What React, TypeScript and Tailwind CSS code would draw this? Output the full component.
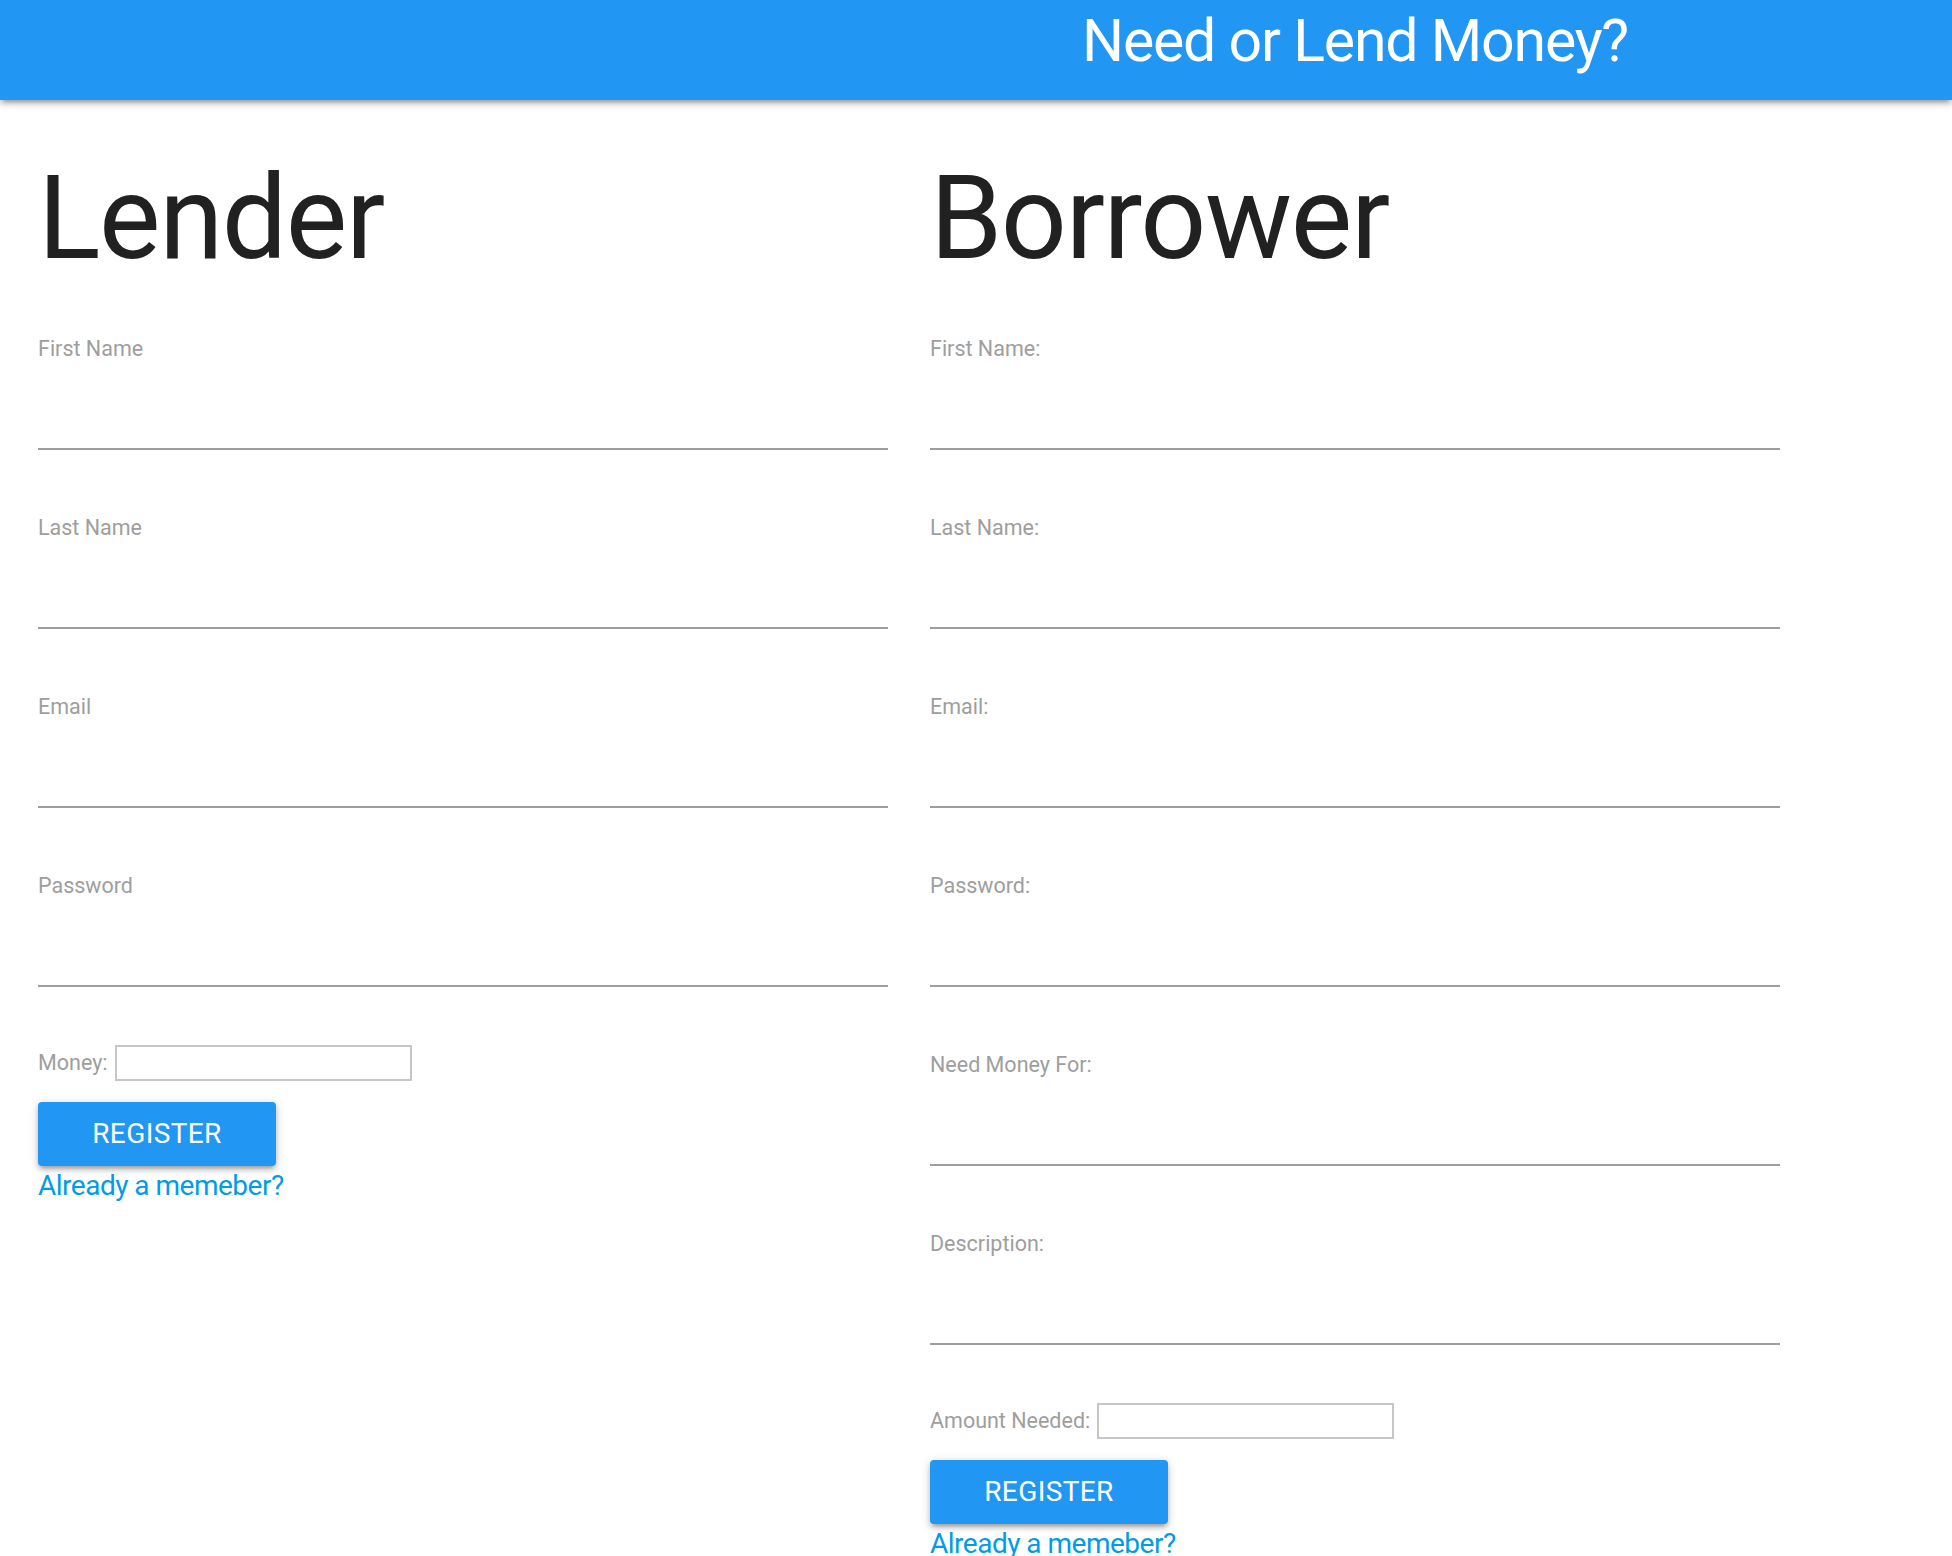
const FONT = "font-['Roboto','Liberation_Sans',sans-serif]";

type FieldProps = { label: string };

function Field({ label }: FieldProps) {
  return (
    <div className="flex flex-col">
      <label className="text-[21.5px] leading-[26px] text-[#9e9e9e]">{label}</label>
      <input
        type="text"
        className="h-[88px] w-full border-b-2 border-[#9e9e9e] bg-transparent outline-none"
      />
    </div>
  );
}

function InlineField({ label }: FieldProps) {
  return (
    <div className="mt-[58px] flex items-center">
      <span className="text-[21.5px] leading-[26px] text-[#9e9e9e]">{label}</span>
      <input
        type="text"
        className="ml-[7px] h-[36px] w-[297px] border-2 border-[#c6c6c6] bg-white outline-none"
      />
    </div>
  );
}

function RegisterBlock() {
  return (
    <>
      <button
        type="button"
        className="mt-[21px] h-[64px] w-[238px] rounded-[4px] bg-[#2196f3] text-[28px] tracking-[0.4px] text-white shadow-[0_4px_4px_0_rgba(0,0,0,0.14),0_6px_2px_-4px_rgba(0,0,0,0.12),0_2px_10px_0_rgba(0,0,0,0.2)]"
      >
        REGISTER
      </button>
      <a href="#" className="block text-[28px] leading-[40px] tracking-[-0.5px] text-[#039be5]">
        Already a memeber?
      </a>
    </>
  );
}

function FormColumn({
  title,
  fields,
  inlineLabel,
}: {
  title: string;
  fields: string[];
  inlineLabel: string;
}) {
  return (
    <div className="flex flex-col">
      <h1 className="text-[116px] leading-[116px] tracking-[-1.4px] text-[#212121]">{title}</h1>
      <div className="mt-[60px] flex flex-col gap-[65px]">
        {fields.map((f) => (
          <Field key={f} label={f} />
        ))}
      </div>
      <InlineField label={inlineLabel} />
      <RegisterBlock />
    </div>
  );
}

export default function App() {
  return (
    <div className={`${FONT} min-h-screen bg-white`}>
      <header className="relative z-10 h-[100px] bg-[#2196f3] shadow-[0_4px_4px_0_rgba(0,0,0,0.14),0_6px_2px_-4px_rgba(0,0,0,0.12),0_2px_10px_0_rgba(0,0,0,0.2)]">
        <div className="pl-[1082px] text-[59px] leading-[82px] tracking-[-1.2px] text-white">
          Need or Lend Money?
        </div>
      </header>

      <main className="grid grid-cols-[850px_850px] gap-x-[42px] pl-[38px] pt-[60px]">
        <FormColumn
          title="Lender"
          fields={["First Name", "Last Name", "Email", "Password"]}
          inlineLabel="Money:"
        />
        <FormColumn
          title="Borrower"
          fields={[
            "First Name:",
            "Last Name:",
            "Email:",
            "Password:",
            "Need Money For:",
            "Description:",
          ]}
          inlineLabel="Amount Needed:"
        />
      </main>
    </div>
  );
}
